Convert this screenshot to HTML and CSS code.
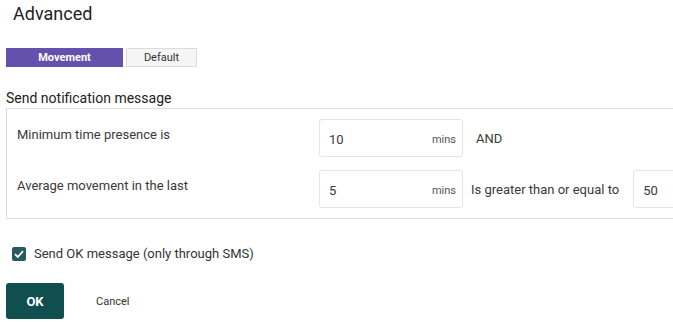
FILE: index.html
```html
<!DOCTYPE html>
<html>
  <head>
    <title>Advanced</title>
    <link rel="stylesheet" href="styles.css">
  </head>
  <body>
    <div class="dialog">
      <h2 class="title">Advanced</h2>

      <div class="tabs">
        <button class="tab tab-active">Movement</button>
        <button class="tab">Default</button>
      </div>

      <div class="section-title">Send notification message</div>
      <div class="rules">
        <div class="rule">
          <div class="rule-label">Minimum time presence is</div>
          <div class="field">
            <span class="field-value">10</span>
            <span class="field-unit">mins</span>
          </div>
          <div class="rule-text">AND</div>
        </div>
        <div class="rule">
          <div class="rule-label">Average movement in the last</div>
          <div class="field">
            <span class="field-value">5</span>
            <span class="field-unit">mins</span>
          </div>
          <div class="rule-text rule-text-tight">Is greater than or equal to</div>
          <div class="field field-small">
            <span class="field-value">50</span>
          </div>
        </div>
      </div>

      <label class="check">
        <span class="check-box">
          <svg width="14" height="14" viewBox="0 0 14 14">
            <path d="M3 7.2 L5.8 10 L11 4.2" fill="none" stroke="#fff" stroke-width="1.8" />
          </svg>
        </span>
        Send OK message (only through SMS)
      </label>

      <div class="actions">
        <button class="btn-ok">OK</button>
        <button class="btn-cancel">Cancel</button>
      </div>
    </div>
  </body>
</html>
```

FILE: styles.css
```css
body {
  margin: 0;
  background-color: #fff;
  color: #333;
  font-family: Roboto, Arial, sans-serif;
  overflow: hidden;
}

.dialog {
  padding: 2px 0 0 6px;
  width: 720px;
}

.title {
  margin: 0 0 0 7px;
  font-size: 18px;
  font-weight: 400;
  line-height: 24px;
  color: #222;
}

.tabs {
  display: flex;
  gap: 3px;
  margin-top: 22px;
}

.tab {
  height: 19px;
  padding: 0;
  border: 1px solid #ddd;
  background-color: #f5f5f5;
  color: #333;
  font-family: Roboto, Arial, sans-serif;
  font-size: 11px;
  width: 71px;
}

.tab-active {
  width: 117px;
  background-color: #6451ae;
  border-color: #6451ae;
  color: #fff;
  font-weight: 700;
}

.section-title {
  margin-top: 21px;
  font-size: 14px;
  line-height: 20px;
  color: #222;
}

.rules {
  border: 1px solid #ddd;
  padding: 10px 0 10px 10px;
  display: flex;
  flex-direction: column;
  gap: 13px;
}

.rule {
  display: flex;
  align-items: center;
  font-size: 13px;
  color: #3a3a3a;
}

.rule-label {
  width: 302px;
  align-self: flex-start;
  padding-top: 8px;
}

.field {
  width: 144px;
  height: 38px;
  box-sizing: border-box;
  border: 1px solid #e4e4e4;
  border-radius: 3px;
  display: flex;
  align-items: center;
  justify-content: space-between;
  padding: 0 6px 0 9px;
}

.field-value {
  font-size: 13px;
  padding-top: 3px;
}

.field-unit {
  font-size: 11px;
  color: #555;
  padding-top: 2px;
}

.field-small {
  width: 80px;
}

.rule-text {
  padding: 0 13px;
}

.rule-text-tight {
  padding: 0 14px 0 8px;
}

.check {
  display: flex;
  align-items: center;
  gap: 8px;
  margin: 27px 0 0 6px;
  font-size: 13px;
  color: #333;
}

.check-box {
  width: 14px;
  height: 14px;
  border-radius: 2px;
  background-color: #275b5d;
  display: flex;
}

.actions {
  display: flex;
  align-items: center;
  gap: 10px;
  margin-top: 22px;
}

.btn-ok {
  width: 58px;
  height: 36px;
  border: none;
  border-radius: 3px;
  background-color: #0f4f4f;
  color: #fff;
  font-family: Roboto, Arial, sans-serif;
  font-size: 13px;
  font-weight: 700;
}

.btn-cancel {
  border: none;
  background: none;
  padding: 0 0 0 22px;
  color: #333;
  font-family: Roboto, Arial, sans-serif;
  font-size: 11px;
}
```
